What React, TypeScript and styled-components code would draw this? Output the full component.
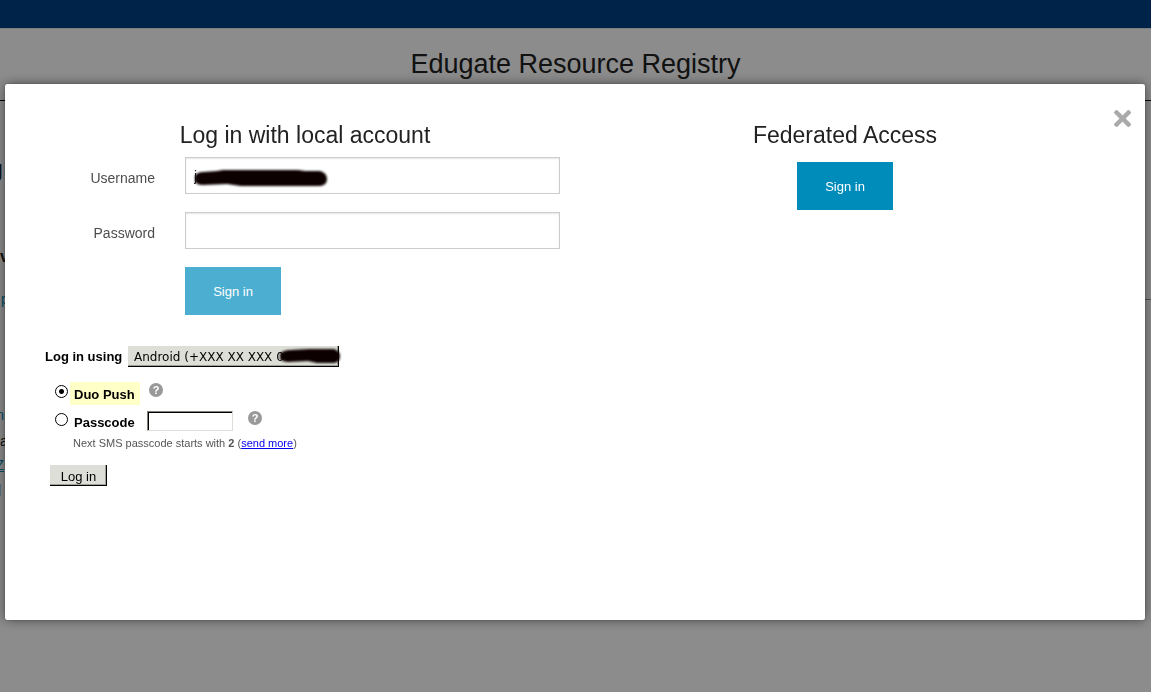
import React from "react";
import styled, { createGlobalStyle } from "styled-components";

const GlobalStyle = createGlobalStyle`
  *, *::before, *::after { box-sizing: border-box; }
  body {
    margin: 0;
    background: #fff;
    color: #222;
    font-family: "Liberation Sans", Arial, sans-serif;
    font-size: 14px;
    overflow: hidden;
  }
`;

const Page = styled.div`
  min-height: 100vh;
`;

const TopBar = styled.div`
  height: 28px;
  background: #004085;
`;

const PageHeader = styled.header`
  height: 73px;
  padding-top: 16px;
  border-top: 1px solid #e6e6e6;
  border-bottom: 1px solid #000;
`;

const SiteTitle = styled.h1`
  margin: 0;
  font-size: 27px;
  line-height: 38px;
  font-weight: 400;
  text-align: center;
`;

const PageBody = styled.main`
  display: grid;
  grid-template-columns: 5px 1fr;
  line-height: 24px;
`;

const PageMain = styled.div`
  height: 199px;
  border-bottom: 1px solid #999;
`;

const PageSide = styled.div`
  overflow: hidden;
`;

const Heading = styled.h2<{ $gap: number; $size: number; $end?: boolean }>`
  display: flex;
  justify-content: ${(p) => (p.$end ? "flex-end" : "flex-start")};
  margin: ${(p) => p.$gap}px ${(p) => (p.$end ? 2 : 0)}px 0 0;
  font-size: ${(p) => p.$size}px;
  line-height: 32px;
`;

const PageLink = styled.a<{ $gap: number; $end?: boolean; $underlined?: boolean }>`
  display: flex;
  justify-content: ${(p) => (p.$end ? "flex-end" : "flex-start")};
  margin: ${(p) => p.$gap}px 1px 0;
  color: #008cba;
  text-decoration: ${(p) => (p.$underlined ? "underline" : "none")};
`;

const PageText = styled.p`
  margin: 2px 0 0;
`;

const Tag = styled.div`
  width: 1px;
  height: 12px;
  margin-top: 7px;
  background: #a0d3e8;
`;

const Backdrop = styled.div`
  position: fixed;
  inset: 0;
  padding: 84px 6px 0 5px;
  background: rgba(0, 0, 0, 0.45);
`;

const Dialog = styled.section`
  position: relative;
  min-height: 536px;
  padding: 30px;
  border-radius: 2px;
  background: #fff;
  box-shadow: 0 0 12px rgba(0, 0, 0, 0.5), 0 0 1px #222;
`;

const CloseButton = styled.button`
  position: absolute;
  top: 26px;
  right: 14px;
  width: 17px;
  height: 17px;
  padding: 0;
  border: 0;
  background: none;
  svg { display: block; }
`;

const Columns = styled.div`
  display: grid;
  grid-template-columns: 1fr 1fr;
`;

const Title = styled.h2`
  margin: 0;
  padding-top: 5px;
  font-size: 23px;
  line-height: 32px;
  font-weight: 400;
  text-align: center;
`;

const LoginForm = styled.form`
  padding-top: 6px;
`;

const Field = styled.div`
  display: grid;
  grid-template-columns: 1fr 3fr;
  margin-bottom: 13px;
`;

const FieldLabel = styled.label`
  padding-right: 15px;
  color: #4d4d4d;
  line-height: 42px;
  text-align: right;
`;

const FieldControl = styled.div`
  position: relative;
  grid-column: 2;
  padding: 0 15px;
`;

const TextInput = styled.input`
  display: block;
  width: 100%;
  height: 37px;
  padding: 6px 8px;
  border: 1px solid #ccc;
  border-radius: 0;
  box-shadow: inset 0 1px 2px rgba(0, 0, 0, 0.1);
  color: #222;
  font: 14px "Liberation Sans", Arial, sans-serif;
`;

const SignInButton = styled.button<{ $muted?: boolean }>`
  width: 96px;
  height: 48px;
  padding: 0;
  border: 0;
  background: ${(p) => (p.$muted ? "#4caed0" : "#008cba")};
  color: #fff;
  font: 13px "Liberation Sans", Arial, sans-serif;
`;

const Federated = styled.div`
  text-align: center;
  ${SignInButton} { margin-top: 11px; }
`;

const DuoForm = styled.form`
  padding: 18px 10px;
  color: #000;
  font-size: 13px;
`;

const DeviceRow = styled.div`
  display: flex;
  align-items: center;
  height: 21px;
  margin-bottom: 12px;
`;

const FactorRow = styled.div`
  display: flex;
  align-items: center;
  height: 28px;
`;

const DeviceLabel = styled.label`
  width: 83px;
  font-weight: 700;
`;

const DeviceBox = styled.div`
  position: relative;
`;

const DeviceSelect = styled.select`
  display: block;
  appearance: none;
  width: 211px;
  height: 21px;
  padding: 2px 6px 0;
  border: solid #000;
  border-width: 0 1px 1px 0;
  border-radius: 0;
  background: #deded8;
  box-shadow: inset -1px -1px #a0a098;
  color: #000;
  font: 12px "DejaVu Sans", sans-serif;
`;

const Redaction = styled.svg<{ $left: number; $top: number }>`
  position: absolute;
  left: ${(p) => p.$left}px;
  top: ${(p) => p.$top}px;
  overflow: visible;
  pointer-events: none;
`;

const Radio = styled.input`
  appearance: none;
  width: 13px;
  height: 13px;
  margin: 0 6px 3px 10px;
  border: 1px solid #000;
  border-radius: 50%;
  background: #fff;
  &:checked { background: radial-gradient(circle, #000 2px, #fff 3px); }
`;

const OptionLabel = styled.label<{ $selected?: boolean }>`
  width: 70px;
  height: 23px;
  margin-left: -4px;
  padding-left: 4px;
  background: ${(p) => (p.$selected ? "#ffffc8" : "transparent")};
  font-weight: 700;
  line-height: 25px;
`;

const HelpButton = styled.button`
  width: 14px;
  height: 14px;
  margin: 0 0 6px 9px;
  padding: 0;
  border: 0;
  border-radius: 50%;
  background: #999;
  color: #fff;
  font: bold 11px/14px "Liberation Sans", Arial, sans-serif;
`;

const PasscodeInput = styled.input`
  width: 86px;
  height: 20px;
  margin: 0 6px 0 7px;
  padding: 0 4px;
  border: 1px solid;
  border-color: #808078 #deded8 #deded8 #808078;
  box-shadow: inset 1px 1px #000;
  background: #fff;
  font: 13px "Liberation Sans", Arial, sans-serif;
`;

const Hint = styled.div`
  margin: 0 0 14px 28px;
  color: #555;
  font-size: 11px;
  line-height: 16px;
  a { color: #0000ee; }
`;

const LogInButton = styled.button`
  display: block;
  width: 57px;
  height: 21px;
  margin-left: 5px;
  padding: 2px 0 0 1px;
  border: solid #000;
  border-width: 0 1px 1px 0;
  background: #deded8;
  box-shadow: inset -1px -1px #a0a098;
  color: #000;
  font: 13px "Liberation Sans", Arial, sans-serif;
`;

export default function App() {
  return (
    <>
      <GlobalStyle />
      <Page>
        <TopBar />
        <PageHeader>
          <SiteTitle>Edugate Resource Registry</SiteTitle>
        </PageHeader>
        <PageBody>
          <PageSide>
            <Heading $gap={52} $size={24} $end>g</Heading>
            <Heading $gap={56} $size={16}>v</Heading>
            <PageLink href="#providers" $gap={14}>p</PageLink>
            <PageLink href="#join" $gap={92} $end>n</PageLink>
            <PageText>a</PageText>
            <PageLink href="#zone" $gap={0} $end $underlined>Z</PageLink>
            <Tag />
          </PageSide>
          <PageMain />
        </PageBody>
      </Page>
      <Backdrop>
        <Dialog role="dialog" aria-label="Log in">
          <CloseButton type="button" aria-label="Close">
            <svg width="17" height="17" viewBox="0 0 17 17">
              <path d="M2.6 2.6 14.4 14.4M14.4 2.6 2.6 14.4" stroke="#aaa" strokeWidth="4.4" strokeLinecap="square" />
            </svg>
          </CloseButton>
          <Columns>
            <div>
              <Title>Log in with local account</Title>
              <LoginForm>
                <Field>
                  <FieldLabel htmlFor="username">Username</FieldLabel>
                  <FieldControl>
                    <TextInput id="username" defaultValue="j" />
                    <Redaction $left={23} $top={11} width="136" height="21" viewBox="0 0 136 21">
                      <defs>
                        <filter id="soft" x="-10%" y="-40%" width="120%" height="180%">
                          <feGaussianBlur stdDeviation="0.8" />
                        </filter>
                      </defs>
                      <path
                        d="M2 8Q4 4 10 4L24 3 30 2 105 2 112 3 127 3Q134 5 134 11 134 17 127 18L48 18 34 16 10 17Q3 17 2 13Z"
                        fill="#0d0000"
                        filter="url(#soft)"
                      />
                    </Redaction>
                  </FieldControl>
                </Field>
                <Field>
                  <FieldLabel htmlFor="password">Password</FieldLabel>
                  <FieldControl>
                    <TextInput id="password" type="password" />
                  </FieldControl>
                </Field>
                <Field>
                  <FieldControl>
                    <SignInButton type="button" $muted>Sign in</SignInButton>
                  </FieldControl>
                </Field>
              </LoginForm>
            </div>
            <Federated>
              <Title>Federated Access</Title>
              <SignInButton type="button">Sign in</SignInButton>
            </Federated>
          </Columns>
          <DuoForm>
            <DeviceRow>
              <DeviceLabel htmlFor="device">Log in using</DeviceLabel>
              <DeviceBox>
                <DeviceSelect id="device">
                  <option>Android (+XXX XX XXX 0</option>
                </DeviceSelect>
                <Redaction $left={150} $top={1} width="65" height="18" viewBox="0 0 65 18">
                  <path
                    d="M2 7Q5 3 13 3L31 2 56 2Q62 4 62 9 62 15 56 16L39 16 30 14 10 15Q2 14 2 11Z"
                    fill="#0d0000"
                    filter="url(#soft)"
                  />
                </Redaction>
              </DeviceBox>
            </DeviceRow>
            <FactorRow>
              <Radio type="radio" name="factor" id="push" defaultChecked />
              <OptionLabel htmlFor="push" $selected>Duo Push</OptionLabel>
              <HelpButton type="button" aria-label="About Duo Push">?</HelpButton>
            </FactorRow>
            <FactorRow>
              <Radio type="radio" name="factor" id="passcode" />
              <OptionLabel htmlFor="passcode">Passcode</OptionLabel>
              <PasscodeInput aria-label="Passcode" />
              <HelpButton type="button" aria-label="About passcodes">?</HelpButton>
            </FactorRow>
            <Hint>
              Next SMS passcode starts with <b>2</b> (<a href="#send">send more</a>)
            </Hint>
            <LogInButton type="button">Log in</LogInButton>
          </DuoForm>
        </Dialog>
      </Backdrop>
    </>
  );
}
